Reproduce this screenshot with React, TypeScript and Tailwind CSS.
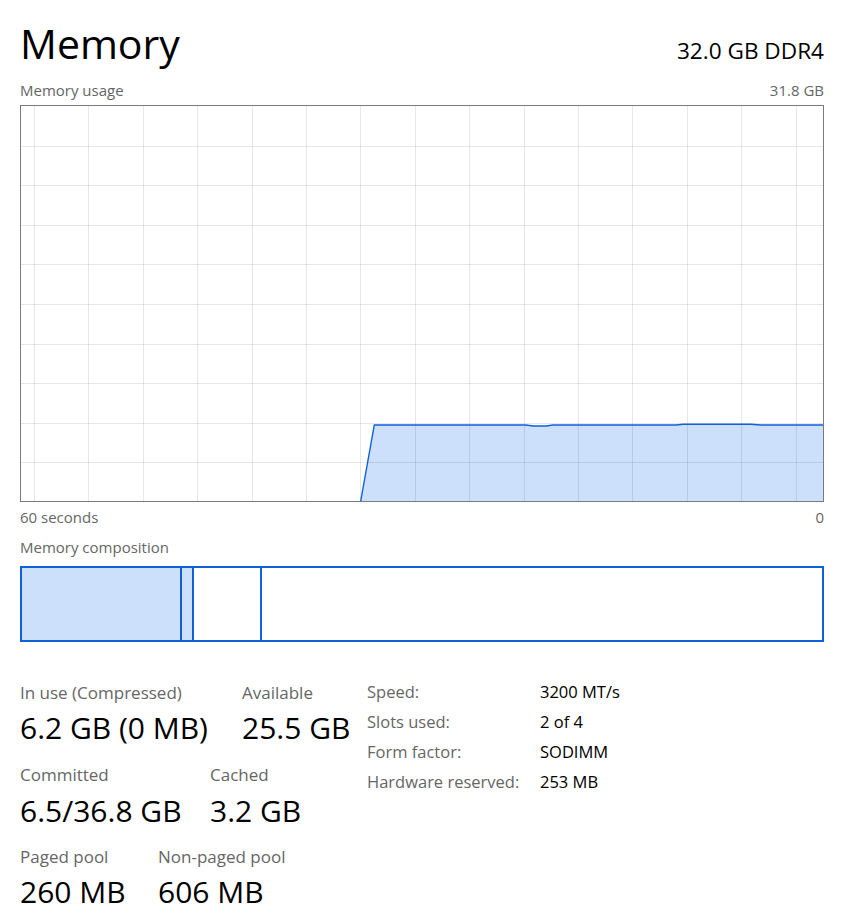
import React from "react";

const vLines = Array.from({ length: 15 }, (_, k) => Math.round(13 + 54.4 * k));
const hLines = Array.from({ length: 9 }, (_, k) => Math.round(39.6 * (k + 1)));

function Graph() {
  const w = 802;
  const h = 395;
  const top = 319;
  const pts: [number, number][] = [
    [339.7, h],
    [353.3, top],
    [505, top],
    [512, top + 1],
    [525, top + 1],
    [532, top],
    [655, top],
    [662, top - 0.7],
    [730, top - 0.7],
    [740, top],
    [w, top],
  ];
  const line = pts.map((p) => p.join(",")).join(" ");
  const area = line + ` ${w},${h}`;
  return (
    <div className="w-[804px] h-[397px] border border-[#7a7a7a] box-border">
      <svg width={w} height={h} className="block">
        <polygon points={area} fill="#cce0fc" />
        {vLines.map((x) => (
          <line key={"v" + x} x1={x + 0.5} x2={x + 0.5} y1={0} y2={h} stroke="rgba(0,0,0,0.095)" strokeWidth={1} />
        ))}
        {hLines.map((y) => (
          <line key={"h" + y} x1={0} x2={w} y1={y + 0.5} y2={y + 0.5} stroke="rgba(0,0,0,0.095)" strokeWidth={1} />
        ))}
        <polyline points={pts.map((p) => p.join(",")).join(" ")} fill="none" stroke="#1160d8" strokeWidth={1.4} />
      </svg>
    </div>
  );
}

function Stat({ label, value, w, gap }: { label: string; value: string; w?: string; gap: string }) {
  return (
    <div className={w}>
      <div className="text-[17px] leading-[22px] text-[#666666] whitespace-nowrap">{label}</div>
      <div className={"text-[30px] leading-[36px] text-black whitespace-nowrap " + gap}>{value}</div>
    </div>
  );
}

export default function App() {
  return (
    <div
      className="w-[856px] h-[919px] bg-white pl-[20px] overflow-hidden"
      style={{ fontFamily: '"Segoe UI", "Open Sans", "Noto Sans", sans-serif' }}
    >
      <div className="w-[804px]">
        <div className="flex items-baseline justify-between mt-[22px]">
          <div className="text-[41px] leading-[42px] text-black">Memory</div>
          <div className="text-[22.6px] leading-[28px] text-black">32.0 GB DDR4</div>
        </div>
        <div className="flex justify-between mt-[15px] text-[15px] leading-[20px] text-[#666666]">
          <span>Memory usage</span>
          <span>31.8 GB</span>
        </div>
        <div className="mt-[5px]">
          <Graph />
        </div>
        <div className="flex justify-between mt-[5px] text-[15px] leading-[20px] text-[#666666]">
          <span>60 seconds</span>
          <span>0</span>
        </div>
        <div className="mt-[10px] text-[15px] leading-[20px] text-[#666666]">Memory composition</div>
        <div className="mt-[9px] h-[76px] w-[804px] border-2 border-[#1160d8] box-border flex">
          <div className="w-[160px] h-full bg-[#cce0fc] border-r-2 border-[#1160d8]" />
          <div className="w-[12px] h-full bg-[#cce0fc] border-r-2 border-[#1160d8]" />
          <div className="w-[68px] h-full border-r-2 border-[#1160d8]" />
          <div className="flex-1 h-full" />
        </div>
        <div className="flex mt-[34px]">
          <div className="w-[347px] flex flex-col">
            <div className="flex mt-[6px]">
              <Stat w="w-[222px]" gap="mt-[6px]" label="In use (Compressed)" value="6.2 GB (0 MB)" />
              <Stat gap="mt-[6px]" label="Available" value="25.5 GB" />
            </div>
            <div className="flex mt-[18px]">
              <Stat w="w-[190px]" gap="mt-[7px]" label="Committed" value="6.5/36.8 GB" />
              <Stat gap="mt-[7px]" label="Cached" value="3.2 GB" />
            </div>
            <div className="flex mt-[17px]">
              <Stat w="w-[138px]" gap="mt-[6px]" label="Paged pool" value="260 MB" />
              <Stat gap="mt-[6px]" label="Non-paged pool" value="606 MB" />
            </div>
          </div>
          <div className="flex flex-col text-[16.5px] leading-[30px] mt-[1px]">
            {[
              ["Speed:", "3200 MT/s"],
              ["Slots used:", "2 of 4"],
              ["Form factor:", "SODIMM"],
              ["Hardware reserved:", "253 MB"],
            ].map(([k, v]) => (
              <div key={k} className="flex">
                <div className="w-[173px] text-[#666666] whitespace-nowrap">{k}</div>
                <div className="text-black whitespace-nowrap">{v}</div>
              </div>
            ))}
          </div>
        </div>
      </div>
    </div>
  );
}
